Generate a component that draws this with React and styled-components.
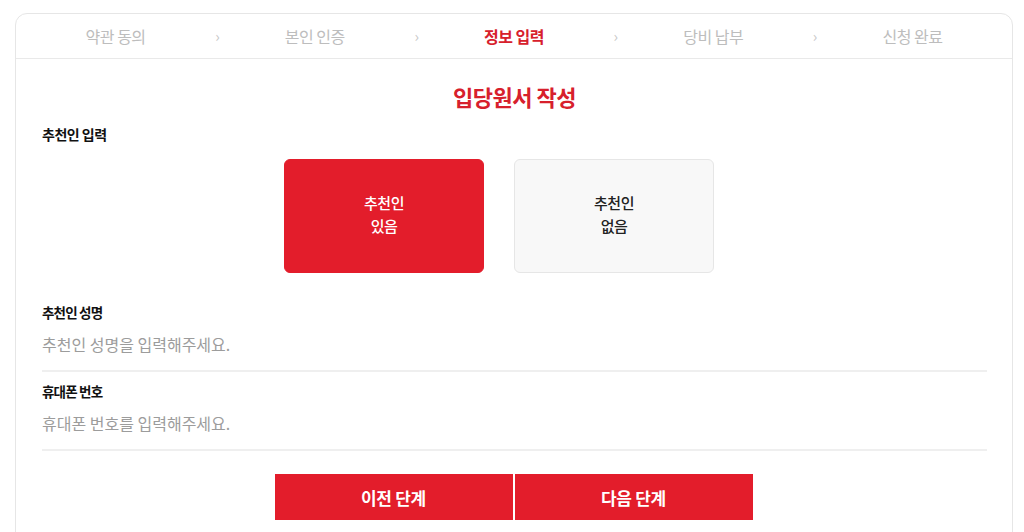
import React from "react";
import styled, { createGlobalStyle } from "styled-components";

const Global = createGlobalStyle`
  html, body { margin: 0; padding: 0; background: #fff; }
  body { font-family: "Noto Sans CJK KR", "Noto Sans", sans-serif; color: #111; }
  * { box-sizing: border-box; }
`;

const RED = "#e31d2b";

const Page = styled.div`
  padding: 13px 11px 0 15px;
  height: 532px;
  overflow: hidden;
`;

const Card = styled.div`
  border: 1px solid #e6e6e6;
  border-radius: 12px;
  background: #fff;
  min-height: 560px;
`;

const Steps = styled.ol`
  list-style: none;
  margin: 0;
  padding: 0;
  display: flex;
  height: 45px;
  border-bottom: 1px solid #e9e9e9;
`;

const Step = styled.li`
  flex: 1;
  position: relative;
  display: flex;
  align-items: center;
  justify-content: center;
  font-size: 16px;
  letter-spacing: -0.5px;
  font-weight: ${p => (p.$active ? 700 : 400)};
  color: ${p => (p.$active ? "#d7202c" : "#bdbdbd")};
  &:not(:last-child)::after {
    content: "›";
    position: absolute;
    right: -4px;
    top: 50%;
    transform: translateY(-54%);
    font-size: 15px;
    font-weight: 400;
    color: #c8c8c8;
  }
`;

const Body = styled.div`
  padding: 21px 25px 0 26px;
`;

const Title = styled.h1`
  margin: 0;
  text-align: center;
  font-size: 22px;
  line-height: 32px;
  font-weight: 700;
  color: #d7202c;
  letter-spacing: -0.5px;
`;

const SectionLabel = styled.h2`
  margin: 12px 0 0;
  font-size: 14px;
  line-height: 20px;
  font-weight: 700;
  letter-spacing: -0.5px;
`;

const Options = styled.div`
  display: flex;
  gap: 30px;
  margin: 15px 0 0 242px;
`;

const Option = styled.button`
  width: 200px;
  height: 114px;
  border-radius: 6px;
  border: 1px solid ${p => (p.$selected ? RED : "#e6e6e6")};
  background: ${p => (p.$selected ? RED : "#f8f8f8")};
  color: ${p => (p.$selected ? "#fff" : "#222")};
  font-family: inherit;
  font-size: 15px;
  line-height: 23px;
  font-weight: 500;
  letter-spacing: -0.5px;
  display: flex;
  flex-direction: column;
  align-items: center;
  justify-content: center;
  padding: 0 0 4px;
  cursor: pointer;
`;

const Field = styled.label`
  display: block;
  padding-bottom: 15px;
  border-bottom: 2px solid #efefef;
  margin-top: ${p => (p.$first ? "30px" : "10px")};
`;

const FieldLabel = styled.div`
  font-size: 13.5px;
  line-height: 19px;
  font-weight: 700;
  letter-spacing: -0.8px;
  color: #111;
`;

const Input = styled.input`
  display: block;
  width: 100%;
  margin-top: 11px;
  border: 0;
  outline: none;
  padding: 0;
  height: 22px;
  font-family: inherit;
  font-size: 16px;
  font-weight: 400;
  letter-spacing: 0;
  color: #222;
  background: transparent;
  &::placeholder { color: #9c9c9c; }
`;

const Actions = styled.div`
  display: flex;
  justify-content: center;
  gap: 2px;
  margin-top: 23px;
  padding-right: 2px;
`;

const ActionButton = styled.button`
  width: 238px;
  height: 46px;
  border: 0;
  background: ${RED};
  color: #fff;
  font-family: inherit;
  font-size: 17px;
  font-weight: 700;
  letter-spacing: -0.3px;
  cursor: pointer;
`;

const steps = ["약관 동의", "본인 인증", "정보 입력", "당비 납부", "신청 완료"];

export default function App() {
  return (
    <>
      <Global />
      <Page>
        <Card>
          <Steps>
            {steps.map((s, i) => (
              <Step key={s} $active={i === 2}>{s}</Step>
            ))}
          </Steps>
          <Body>
            <Title>입당원서 작성</Title>
            <SectionLabel>추천인 입력</SectionLabel>
            <Options>
              <Option $selected>
                <span>추천인</span>
                <span>있음</span>
              </Option>
              <Option>
                <span>추천인</span>
                <span>없음</span>
              </Option>
            </Options>
            <Field $first>
              <FieldLabel>추천인 성명</FieldLabel>
              <Input placeholder="추천인 성명을 입력해주세요." />
            </Field>
            <Field>
              <FieldLabel>휴대폰 번호</FieldLabel>
              <Input placeholder="휴대폰 번호를 입력해주세요." />
            </Field>
            <Actions>
              <ActionButton>이전 단계</ActionButton>
              <ActionButton>다음 단계</ActionButton>
            </Actions>
          </Body>
        </Card>
      </Page>
    </>
  );
}
